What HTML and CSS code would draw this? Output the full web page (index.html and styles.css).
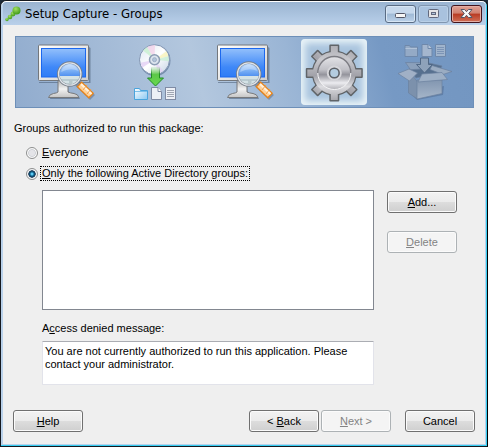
FILE: index.html
```html
<!DOCTYPE html>
<html lang="en">
<head>
    <meta charset="UTF-8">
    <meta name="viewport" content="width=device-width, initial-scale=1.0">
    <title>Setup Capture - Groups</title>
    <link rel="stylesheet" href="styles.css">
</head>
<body>
    <div class="window">
        <header class="titlebar">
            <svg class="app-icon" width="16" height="16" viewBox="0 0 16 16" aria-hidden="true">
                <defs>
                    <radialGradient id="ball" cx="0.4" cy="0.3" r="0.7">
                        <stop offset="0" stop-color="#a4e060"/>
                        <stop offset="1" stop-color="#3f9a1c"/>
                    </radialGradient>
                </defs>
                <circle cx="2" cy="13.5" r="1.7" fill="url(#ball)"/>
                <circle cx="5" cy="11" r="2.3" fill="url(#ball)"/>
                <circle cx="8" cy="8" r="2.4" fill="url(#ball)"/>
                <circle cx="11.5" cy="4.5" r="4" fill="url(#ball)"/>
            </svg>
            <h1>Setup Capture - Groups</h1>
            <div class="window-controls">
                <button type="button" class="control" aria-label="Minimize">
                    <svg width="13" height="11" viewBox="0 0 13 11"><rect x="1.5" y="5.5" width="10" height="4" rx="1" fill="#f6f6f6" stroke="#535666"/></svg>
                </button>
                <button type="button" class="control control-off" aria-label="Maximize" disabled>
                    <svg width="13" height="11" viewBox="0 0 13 11"><rect x="1.5" y="1.5" width="10" height="8" rx="1" fill="#e4e4e6" stroke="#62687c"/><rect x="4.5" y="4.5" width="4" height="2" fill="#b0c4da" stroke="#62687c"/></svg>
                </button>
                <button type="button" class="control control-close" aria-label="Close">
                    <svg width="13" height="11" viewBox="0 0 13 11"><path d="M1 1.500h3.500l2 2.200 2-2.200H12L8.700 5.500 12 9.500H8.500l-2-2.200-2 2.200H1l3.300-4z" fill="#f8f8f8" stroke="#535666"/></svg>
                </button>
            </div>
        </header>

        <main class="content">
            <svg class="defs" width="0" height="0" aria-hidden="true">
                <defs>
                    <linearGradient id="screen" x1="0" y1="0" x2="0" y2="1">
                        <stop offset="0" stop-color="#93c0fb"/>
                        <stop offset="0.65" stop-color="#3f88f8"/>
                        <stop offset="1" stop-color="#2f7cf6"/>
                    </linearGradient>
                    <linearGradient id="frame" x1="0" y1="0" x2="1" y2="1">
                        <stop offset="0" stop-color="#ffffff"/>
                        <stop offset="1" stop-color="#cfcfcf"/>
                    </linearGradient>
                    <linearGradient id="stand" x1="0" y1="0" x2="0" y2="1">
                        <stop offset="0" stop-color="#b4b4b4"/>
                        <stop offset="0.5" stop-color="#f2f2f2"/>
                        <stop offset="1" stop-color="#c4c4c4"/>
                    </linearGradient>
                    <linearGradient id="lens" x1="0" y1="0" x2="0" y2="1">
                        <stop offset="0" stop-color="#c4defc"/>
                        <stop offset="0.3" stop-color="#84b6f6"/>
                        <stop offset="0.6" stop-color="#4f90f0"/>
                    </linearGradient>
                    <linearGradient id="disc" x1="0" y1="0" x2="1" y2="1">
                        <stop offset="0" stop-color="#dce6f2"/>
                        <stop offset="0.5" stop-color="#ffffff"/>
                        <stop offset="1" stop-color="#c4d2e4"/>
                    </linearGradient>
                    <linearGradient id="arrow" x1="0" y1="0" x2="0" y2="1">
                        <stop offset="0" stop-color="#8ae070" stop-opacity="0.1"/>
                        <stop offset="0.4" stop-color="#5cc848"/>
                        <stop offset="1" stop-color="#6ad850"/>
                    </linearGradient>
                    <linearGradient id="arrowEdge" x1="0" y1="0" x2="0" y2="1">
                        <stop offset="0" stop-color="#1f8c22" stop-opacity="0"/>
                        <stop offset="0.4" stop-color="#1f8c22"/>
                    </linearGradient>
                    <linearGradient id="folder" x1="0" y1="0" x2="1" y2="1">
                        <stop offset="0" stop-color="#ffffff"/>
                        <stop offset="1" stop-color="#88c8f2"/>
                    </linearGradient>
                    <linearGradient id="metal" gradientUnits="userSpaceOnUse" x1="0" y1="-27" x2="0" y2="27">
                        <stop offset="0" stop-color="#b0b0b6"/>
                        <stop offset="0.25" stop-color="#c8c8cd"/>
                        <stop offset="0.55" stop-color="#a2a2a9"/>
                        <stop offset="0.75" stop-color="#dcdce0"/>
                        <stop offset="1" stop-color="#a8a8ae"/>
                    </linearGradient>
                    <linearGradient id="metalIn" x1="0" y1="0" x2="0" y2="1">
                        <stop offset="0" stop-color="#e4e4e8"/>
                        <stop offset="0.4" stop-color="#c0c0c6"/>
                        <stop offset="0.55" stop-color="#94949c"/>
                        <stop offset="0.8" stop-color="#ececf0"/>
                        <stop offset="1" stop-color="#b0b0b6"/>
                    </linearGradient>
                    <linearGradient id="boxFront" x1="0" y1="0" x2="0" y2="1">
                        <stop offset="0" stop-color="#8296b0"/>
                        <stop offset="1" stop-color="#a6b6ca"/>
                    </linearGradient>
                    <symbol id="monitor" viewBox="0 0 66 66">
                        <path d="M18 60q0-4 7-5 2-1 2-9h9q0 8 2 9 9 1 10 5z" fill="#40536e" opacity="0.5"/>
                        <path d="M7 43h50V8l1.500 1v35H7z" fill="#40536e" opacity="0.5"/>
                        <rect x="6.500" y="6" width="50" height="35.500" rx="1" fill="url(#frame)" stroke="#73777c"/>
                        <rect x="9.500" y="9.500" width="44" height="28.500" fill="url(#screen)" stroke="#1c68ee"/>
                        <path d="M26 41.500h10v11.500q2 1 6 1.500 4 .5 5 4H16.500q1-3.500 5-4 3.500-.5 4.500-1.500z" fill="url(#stand)" stroke="#77797c"/>
                        <path d="M45.500 44l15 14.500" stroke="#4a5a70" stroke-width="7" opacity="0.4"/>
                        <path d="M47 45l12.500 12" stroke="#e8851c" stroke-width="7.500"/>
                        <path d="M48 46l10.500 10" stroke="#ffd29a" stroke-width="5"/>
                        <path d="M49 45l10.500 10" stroke="#fff2e0" stroke-width="2"/>
                        <path d="M51 51l4-5M55 55l4-5" stroke="#f0a04c" stroke-width="1"/>
                        <circle cx="37.700" cy="35" r="11.300" fill="url(#lens)"/>
                        <path d="M26.500 37h22.400a11.300 11.300 0 0 1-22.400 0z" fill="#d4e2e6"/>
                        <path d="M28 41h20M38 41v4" stroke="#9fb4bc"/>
                        <path d="M29.500 44h8v-3h3v5q-6 2-11-2z" fill="#b8c8cc"/>
                        <path d="M29 33a9 9 0 0 1 17.500-1q-8-4-17.500 1z" fill="#fff" opacity="0.3"/>
                        <circle cx="37.700" cy="35" r="11.500" fill="none" stroke="#777e88" stroke-width="2.500"/>
                        <circle cx="37.700" cy="35" r="11.200" fill="none" stroke="#dfe4ea" stroke-width="1.300"/>
                    </symbol>
                </defs>
            </svg>

            <ol class="steps" aria-label="Steps">
                <li><svg viewBox="0 0 66 66"><use href="#monitor"/></svg></li>
                <li>
                    <svg viewBox="0 0 66 66">
                        <circle cx="33" cy="21.500" r="15.500" fill="#50688a" opacity="0.6"/>
                        <circle cx="32.500" cy="20.700" r="15" fill="url(#disc)" stroke="#8296b4"/>
                        <path d="M32.500 20.700L25 8q4-2.200 8-2z" fill="#f4c8e4" opacity="0.6"/>
                        <path d="M32.500 20.700L21 11.500 25 8z" fill="#c8f0d0" opacity="0.8"/>
                        <path d="M32.500 20.700l12-8.500 2 5z" fill="#fbf4b0" opacity="0.7"/>
                        <path d="M32.500 20.700l14-3.500.5 5z" fill="#c6f0d0" opacity="0.7"/>
                        <path d="M32.500 20.700l-14 3 1.500 5z" fill="#e4d0f4" opacity="0.8"/>
                        <path d="M32.500 20.700l9 11.500-5 2z" fill="#e4d0f4" opacity="0.7"/>
                        <circle cx="32.500" cy="20.700" r="5" fill="#dce4ee" stroke="#8d9db4" stroke-width="1.500"/>
                        <circle cx="32.500" cy="20.700" r="2" fill="#b2c4da" stroke="#a0b0c6"/>
                        <path d="M29.500 28v11h-4l8 8 8-8h-4V28z" fill="url(#arrow)" stroke="url(#arrowEdge)"/>
                        <path d="M12.500 60.500v-11h5l1 2h7v9z" fill="url(#folder)" stroke="#4aa4dc"/>
                        <path d="M13 52.500h12" stroke="#7cc0ea"/>
                        <path d="M29.500 48.500h6.500l3.500 4v8h-10z" fill="#edf0f6" stroke="#7f8ba4"/>
                        <path d="M36 48.500v4h3.500" fill="#fff" stroke="#7f8ba4"/>
                        <rect x="43.500" y="48.500" width="10" height="12" fill="#edf0f6" stroke="#7f8ba4"/>
                        <path d="M45 51.500h7M45 53.500h7M45 55.500h7M45 57.500h7" stroke="#a0a6b2"/>
                    </svg>
                </li>
                <li><svg viewBox="0 0 66 66"><use href="#monitor"/></svg></li>
                <li class="current" aria-current="step">
                    <svg viewBox="0 0 66 66">
                        <g transform="translate(33.300 34)">
                            <g fill="#70747c" stroke="#606468" stroke-width="2" stroke-linejoin="round">
                                <path id="teeth" d="M-4-27.500h8V-19h-8zM-4 19h8v8.500h-8zM-27.500-4v8H-19v-8zM19-4v8h8.500v-8z"/>
                                <use href="#teeth" transform="rotate(45)"/>
                                <circle r="21.500"/>
                            </g>
                            <g fill="url(#metal)">
                                <path id="teethTop" d="M-3.500-27h7v54h-7zM-27-3.500h54v7h-54z"/>
                                <use href="#teethTop" transform="rotate(45)"/>
                                <circle r="21.300"/>
                            </g>
                            <circle r="16.500" fill="url(#metalIn)" stroke="#f4f4f6"/>
                            <path d="M-16.500 0a16.500 16.500 0 0 1 33 0" fill="none" stroke="#7b7b82" stroke-width="1.500"/>
                            <circle r="6.500" fill="none" stroke="#d6d6da" stroke-width="2"/>
                            <circle r="4.800" fill="#b4ccdf" stroke="#5c6066" stroke-width="1.500"/>
                        </g>
                    </svg>
                </li>
                <li>
                    <svg viewBox="0 0 66 66">
                        <g stroke="#6f88aa" stroke-linejoin="round">
                            <path d="M14 17.500V6.500h4.500l1 1.500h7v9.500z" fill="#94aac6"/>
                            <path d="M14.500 9.500h11.500" stroke="#b0c2d8"/>
                            <path d="M31 17.500v-12h6l4 4v8z" fill="#a4b6ce"/>
                            <path d="M37 5.500v4h4" fill="#b8c8dc"/>
                            <path d="M44.500 5.500h10v12h-10z" fill="#a0b4cc"/>
                            <path d="M46 8.500h7M46 10.500h7M46 12.500h7M46 14.500h7" stroke="#7c94b6"/>
                        </g>
                        <path d="M19 54l7 7 26-5 1-9z" fill="#4b6890" opacity="0.5"/>
                        <g stroke="#6b819f" stroke-width="0.700" stroke-linejoin="round">
                            <path d="M18 30l20-6 13 3-4 7-22 5z" fill="#56708f"/>
                            <path d="M14.500 23.500l15 .2 6 6-16 1z" fill="#8ba0bb"/>
                            <path d="M41 26.500l20 6-9 3-13-5z" fill="#9aacc2"/>
                            <path d="M17.500 31l9 12v17l-9-6z" fill="#7c91ac"/>
                            <path d="M26 41h25v13.500L26 60z" fill="url(#boxFront)"/>
                            <path d="M7 34.500L18 30l8.500 4-8 8z" fill="#a0b0c6"/>
                            <path d="M31 35l20-1.500 5.500 7L27 43z" fill="#9dafc5"/>
                        </g>
                        <path d="M29.500 19v6.500h-4l8 8.500 8-8.500h-4V19z" fill="#8ea2ba" stroke="#506886"/>
                    </svg>
                </li>
            </ol>

            <form class="groups">
                <fieldset>
                    <legend>Groups authorized to run this package:</legend>
                    <label class="radio">
                        <input type="radio" name="access" value="everyone">
                        <span><u>E</u>veryone</span>
                    </label>
                    <label class="radio">
                        <input type="radio" name="access" value="groups" checked>
                        <span class="focused"><u>O</u>nly the following Active Directory groups:</span>
                    </label>
                </fieldset>

                <div class="list-row">
                    <select class="group-list" multiple aria-label="Active Directory groups"></select>
                    <div class="list-buttons">
                        <button type="button" class="btn"><u>A</u>dd...</button>
                        <button type="button" class="btn" disabled><u>D</u>elete</button>
                    </div>
                </div>

                <div class="message">
                    <label for="deniedMessage">A<u>c</u>cess denied message:</label>
                    <textarea id="deniedMessage" spellcheck="false">You are not currently authorized to run this application. Please contact your administrator.</textarea>
                </div>
            </form>

            <footer class="footer">
                <button type="button" class="btn help"><u>H</u>elp</button>
                <button type="button" class="btn">&lt; <u>B</u>ack</button>
                <button type="button" class="btn" disabled><u>N</u>ext &gt;</button>
                <button type="button" class="btn cancel">Cancel</button>
            </footer>
        </main>
    </div>
</body>
</html>
```

FILE: styles.css
```css
* {
    box-sizing: border-box;
}
body {
    margin: 0;
    background: #1c2a38;
    font-family: "Liberation Sans", Arial, sans-serif;
    font-size: 11px;
    line-height: 13px;
    color: #000;
}
button, select, textarea {
    font: inherit;
    color: inherit;
}
.window {
    min-height: 100vh;
    display: flex;
    flex-direction: column;
    padding: 1px 2px 2px;
    border: 1px solid #14181e;
    border-right-color: #000;
    border-radius: 6px 6px 0 0;
    background: #b9d1ea;
    box-shadow: inset -1px -1px 0 #35cdf0, inset 0 1px 0 #fff;
}
.titlebar {
    height: 23px;
    display: flex;
    align-items: center;
    padding: 0 3px 0 2px;
    background: linear-gradient(#9ab4d1, #b9d0ea);
    border-radius: 4px 4px 0 0;
}
.titlebar h1 {
    flex: 1;
    margin: 0 0 0 4px;
    font-family: "DejaVu Sans Condensed", "DejaVu Sans", sans-serif;
    font-size: 13px;
    font-weight: normal;
    line-height: 18px;
}
.window-controls {
    display: flex;
    gap: 2px;
}
.control {
    width: 31px;
    height: 18px;
    display: flex;
    align-items: center;
    justify-content: center;
    padding: 0;
    border: 1px solid #5a6c84;
    border-radius: 3px;
    background: linear-gradient(#c6d8ec 45%, #9fb9d5 50%, #bcd2ea);
    box-shadow: inset 0 0 0 1px #d8e6f4;
}
.control-off {
    border-color: #8196b0;
    background: #a9c2de;
    box-shadow: inset 0 0 0 1px #b9cfe6;
}
.control-close {
    border-color: #43141c;
    background: linear-gradient(#e0a296, #d0806f 45%, #b83a22 50%, #d07058);
    box-shadow: inset 0 0 0 1px #e4aea4;
}
.content {
    flex: 1;
    display: flex;
    flex-direction: column;
    padding: 11px 10px 12px;
    background: #efefef;
}

/* wizard steps */
.steps {
    display: flex;
    margin: 0 1px 0 2px;
    padding: 1px 4px;
    list-style: none;
    border: 1px solid #6d8fb8;
    background: linear-gradient(75deg, #91acce, #b3c7de 40%, #9ab5d5 60%, #7699c4 80%, #7396c1);
}
.steps li {
    flex: 1;
    display: flex;
    justify-content: center;
}
.steps svg {
    width: 66px;
    height: 66px;
    margin: 1px 0;
}
.steps .current svg {
    border-radius: 4px;
    background: #a9c4de;
    box-shadow: inset 0 0 7px 4px #eaf4f8;
}

/* form */
.groups {
    padding: 14px 0 0 1px;
}
fieldset {
    margin: 0;
    padding: 0;
    border: 0;
}
legend {
    padding: 0;
    margin-bottom: 10px;
}
.radio {
    display: flex;
    align-items: center;
    gap: 2px;
    height: 15px;
    margin: 0 0 6px 12px;
}
.radio input {
    appearance: none;
    width: 12px;
    height: 12px;
    margin: 0;
    border: 1px solid #8e8f8f;
    border-radius: 50%;
    background: radial-gradient(#e4e4e8 40%, #c2c6cc 46%, #fafafa 60%);
}
.radio input:checked {
    background: radial-gradient(circle at 50% 50%, #5ccaf4 12%, #10658f 28%, #122f4c 48%, #f2f4f6 56%);
}
.radio span {
    padding: 0 1px;
    border: 1px solid transparent;
    white-space: nowrap;
}
.radio .focused {
    border: 1px dotted #000;
}
.list-row {
    display: flex;
    gap: 13px;
    margin: 3px 18px 0 28px;
}
.group-list {
    appearance: none;
    flex: 1;
    min-width: 0;
    height: 120px;
    padding: 0;
    border: 1px solid #828790;
    border-radius: 0;
    background: #fff;
    outline: 0;
}
.list-buttons {
    display: flex;
    flex-direction: column;
    gap: 18px;
    padding-top: 1px;
}
.message {
    margin: 12px 101px 0 28px;
}
.message label {
    display: block;
    margin-bottom: 6px;
}
.message textarea {
    display: block;
    width: 100%;
    height: 44px;
    padding: 3px 2px;
    border: 1px solid #e2e3ea;
    border-top-color: #abadb3;
    border-radius: 1px;
    background: #fff;
    resize: none;
    outline: 0;
    overflow: hidden;
}
.btn {
    width: 70px;
    height: 22px;
    padding: 0;
    border: 1px solid #707070;
    border-radius: 3px;
    background: linear-gradient(#f2f2f2, #ebebeb 48%, #dddddd 50%, #cfcfcf);
    box-shadow: inset 0 0 0 1px #fbfbfb;
    text-align: center;
}
.btn:disabled {
    border-color: #adb2b5;
    background: #f4f4f4;
    color: #838383;
}
.footer {
    display: flex;
    gap: 2px;
    margin-top: auto;
}
.footer .help {
    margin-right: auto;
}
.footer .cancel {
    margin-left: 12px;
}
```
